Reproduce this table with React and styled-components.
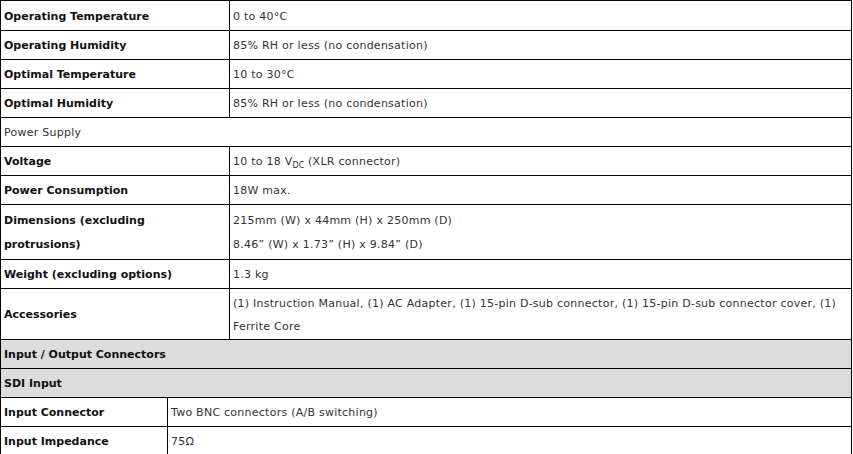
import React from 'react';
import styled, { createGlobalStyle } from 'styled-components';

const Global = createGlobalStyle`
  html, body {
    margin: 0;
    padding: 0;
    background: #fff;
  }
  body {
    font-family: "DejaVu Sans", Verdana, sans-serif;
    font-size: 11px;
    color: #333;
  }
`;

const Table = styled.table`
  width: 852px;
  border-collapse: collapse;
  table-layout: fixed;
  margin-top: ${p => (p.$joined ? '-1px' : '0')};

  tr:first-child > td {
    padding-top: ${p => (p.$joined ? '3px' : '4px')};
  }
`;

const Row = styled.tr`
  background: ${p => (p.$shade ? '#dcdcdc' : '#fff')};
`;

const Label = styled.td`
  border: 1px solid #000;
  padding: ${p => p.$pad || '3px 3px 1px'};
  line-height: 24px;
  font-weight: bold;
  color: #111;
  vertical-align: middle;
`;

const Value = styled.td`
  border: 1px solid #000;
  padding: ${p => p.$pad || '3px 3px 1px'};
  line-height: ${p => p.$lh || '24px'};
  letter-spacing: 0.25px;
  color: #333;
  vertical-align: middle;
`;

const Sub = styled.sub`
  font-size: 8px;
  vertical-align: -3px;
  line-height: 0;
  letter-spacing: 0;
`;

const upper = [
  ['Operating Temperature', '0 to 40°C'],
  ['Operating Humidity', '85% RH or less (no condensation)'],
  ['Optimal Temperature', '10 to 30°C'],
  ['Optimal Humidity', '85% RH or less (no condensation)'],
];

export default function App() {
  return (
    <>
      <Global />
      <Table>
        <colgroup>
          <col style={{ width: 229 }} />
          <col />
        </colgroup>
        <tbody>
          {upper.map(([k, v]) => (
            <Row key={k}>
              <Label>{k}</Label>
              <Value>{v}</Value>
            </Row>
          ))}
          <Row>
            <Value colSpan={2}>Power Supply</Value>
          </Row>
          <Row>
            <Label>Voltage</Label>
            <Value>
              10 to 18 V<Sub>DC</Sub> (XLR connector)
            </Value>
          </Row>
          <Row>
            <Label>Power Consumption</Label>
            <Value>18W max.</Value>
          </Row>
          <Row>
            <Label $pad="4px 3px 2px">
              Dimensions (excluding
              <br />
              protrusions)
            </Label>
            <Value $pad="4px 3px 2px">
              215mm (W) x 44mm (H) x 250mm (D)
              <br />
              8.46” (W) x 1.73” (H) x 9.84” (D)
            </Value>
          </Row>
          <Row>
            <Label>Weight (excluding options)</Label>
            <Value>1.3 kg</Value>
          </Row>
          <Row>
            <Label>Accessories</Label>
            <Value $lh="23px">
              (1) Instruction Manual, (1) AC Adapter, (1) 15-pin D-sub connector, (1) 15-pin D-sub connector cover, (1) Ferrite Core
            </Value>
          </Row>
        </tbody>
      </Table>
      <Table $joined>
        <colgroup>
          <col style={{ width: 167 }} />
          <col />
        </colgroup>
        <tbody>
          <Row $shade>
            <Label colSpan={2}>Input / Output Connectors</Label>
          </Row>
          <Row $shade>
            <Label colSpan={2}>SDI Input</Label>
          </Row>
          <Row>
            <Label>Input Connector</Label>
            <Value>Two BNC connectors (A/B switching)</Value>
          </Row>
          <Row>
            <Label>Input Impedance</Label>
            <Value>75Ω</Value>
          </Row>
        </tbody>
      </Table>
    </>
  );
}
